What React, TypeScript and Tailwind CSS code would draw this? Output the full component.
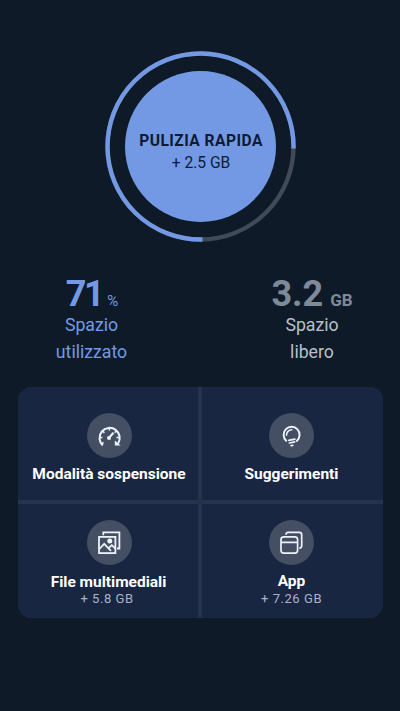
import type { ReactNode } from "react";

function SpeedIcon() {
  return (
    <svg viewBox="0 0 45 45" className="size-[45px]" fill="none" stroke="currentColor" strokeWidth="2">
      <path d="M15.8 32.4 A10.1 10.1 0 1 1 31 30.6" />
      <path d="M27.8 27.4 V32.6 H33.6 Z" fill="currentColor" stroke="none" />
      <path d="M12.4 24.6 H15.4 M15.3 17.8 L17.4 19.9 M22.4 14.6 V17.6 M29.5 17.8 L27.6 19.8 M32.3 24.6 H29.5 M14.4 31 L16.6 29.4" strokeWidth="1.5" />
      <path d="M22.2 24.6 L26.4 19.8" strokeWidth="2.2" />
      <circle cx="22" cy="24.9" r="2" fill="currentColor" stroke="none" />
    </svg>
  );
}

function BulbIcon() {
  return (
    <svg viewBox="0 0 45 45" className="size-[45px]" fill="none" stroke="currentColor" strokeWidth="2" strokeLinecap="round">
      <path d="M17.2 27.7 A8 8 0 1 1 27.8 27.9" />
      <path d="M17.5 22.2 A5.3 5.3 0 0 1 22.8 16.8" strokeWidth="1.5" />
      <path d="M19.8 27.3 L25.9 26.2 M20.4 30 L25.6 28.9 M22.2 32.6 L23.8 32.3" strokeWidth="1.7" />
    </svg>
  );
}

function MediaIcon() {
  return (
    <svg viewBox="0 0 45 45" className="size-[45px]" fill="none" stroke="currentColor" strokeWidth="1.8">
      <path d="M16.3 15.3 V12.4 H32.4 V28.5 H30" />
      <rect x="12" y="16.9" width="16.4" height="16.2" />
      <path d="M12.4 29 L17.2 23.8 L24 30.8 M21.3 28.3 L24.8 25.2 L28.4 28.5" />
      <circle cx="22.8" cy="20.9" r="2.5" fill="currentColor" stroke="none" />
    </svg>
  );
}

function AppsIcon() {
  return (
    <svg viewBox="0 0 45 45" className="size-[45px]" fill="none" stroke="currentColor" strokeWidth="1.7">
      <path d="M17 14.7 Q17.1 12.4 19.2 12.4 H30.3 Q32.7 12.4 32.7 14.8 V25.8 Q32.7 28.1 30.3 28.2" />
      <rect x="12" y="16.8" width="16.6" height="16.3" rx="2.8" />
      <path d="M12 22.3 H28.6" />
    </svg>
  );
}

const tiles = [
  { label: "Modalità sospensione", icon: SpeedIcon, spacing: "pt-[26px] pl-[2px]", labelClass: "mt-[6px]" },
  { label: "Suggerimenti", icon: BulbIcon, spacing: "pt-[26px] pr-[2px]", labelClass: "mt-[6px]" },
  { label: "File multimediali", size: "+ 5.8 GB", icon: MediaIcon, spacing: "pt-4 pl-[2px]", labelClass: "mt-[7px] mb-[-1px] pr-[1px]", sizeClass: "pr-[4px]" },
  { label: "App", size: "+ 7.26 GB", icon: AppsIcon, spacing: "pt-4 pr-[2px]", labelClass: "mt-[6px]", sizeClass: "" },
];

function Stat({ className, children }: { className: string; children: ReactNode }) {
  return <div className={`w-[120px] flex flex-col items-center text-center ${className}`}>{children}</div>;
}

export default function App() {
  return (
    <div className="w-full min-h-[711px] bg-[#0f1a29] font-['Roboto',sans-serif] flex flex-col">
      {/* Quick clean */}
      <div className="mt-[51px] ml-[105px] size-[191px] grid place-items-center">
        <svg viewBox="0 0 191 191" className="size-[191px] col-start-1 row-start-1" fill="none" strokeWidth="4.4">
          <circle cx="95.5" cy="95.5" r="93" stroke="#414a57" />
          <path d="M97.5 188.5 A93 93 0 1 1 188.5 97.5" stroke="#7399e5" />
        </svg>
        <button className="col-start-1 row-start-1 size-[151px] rounded-full bg-[#7399e5] text-[#0f1a33] flex flex-col items-center justify-center pt-[10px] pl-[1px]">
          <span className="text-[15.6px] leading-[22px] font-bold tracking-[0.45px] whitespace-nowrap">PULIZIA RAPIDA</span>
          <span className="text-[15.6px] leading-[22px]">+ 2.5 GB</span>
        </button>
      </div>

      {/* Storage stats */}
      <div className="mt-[31px] h-[114px] pl-[31px] pr-[28px] flex justify-between">
        <Stat className="text-[#7399e5]">
          <div className="h-[39px] flex items-baseline gap-[5px] pl-[2px]">
            <span className="text-[36px] leading-[42px] font-bold tracking-[-2.5px]">71</span>
            <span className="text-[15px]">%</span>
          </div>
          <div className="text-[17.7px] leading-[27px] pl-[1px]">Spazio<br />utilizzato</div>
        </Stat>
        <Stat className="text-[#b7bfca]">
          <div className="h-[39px] flex items-baseline gap-[7px] text-[#7f8a99]">
            <span className="text-[36px] leading-[42px] font-bold">3.2</span>
            <span className="text-[17px] font-bold">GB</span>
          </div>
          <div className="text-[17.7px] leading-[27px]">Spazio<br />libero</div>
        </Stat>
      </div>

      {/* Tiles */}
      <div className="ml-[18px] w-[365px] h-[231px] rounded-[14px] overflow-hidden bg-[#26334c] grid grid-cols-[180px_181px] grid-rows-[113px_114px] gap-1">
        {tiles.map((tile) => (
          <div key={tile.label} className={`bg-[#192642] flex flex-col items-center ${tile.spacing}`}>
            <div className="size-[45px] rounded-full bg-[#444f64] text-[#edf2fa]">
              <tile.icon />
            </div>
            <span className={`text-[15.5px] leading-5 font-bold text-white whitespace-nowrap ${tile.labelClass}`}>
              {tile.label}
            </span>
            {tile.size && (
              <span className={`text-[13px] leading-4 tracking-[0.55px] text-[#a9b3c5] ${tile.sizeClass}`}>{tile.size}</span>
            )}
          </div>
        ))}
      </div>
    </div>
  );
}
